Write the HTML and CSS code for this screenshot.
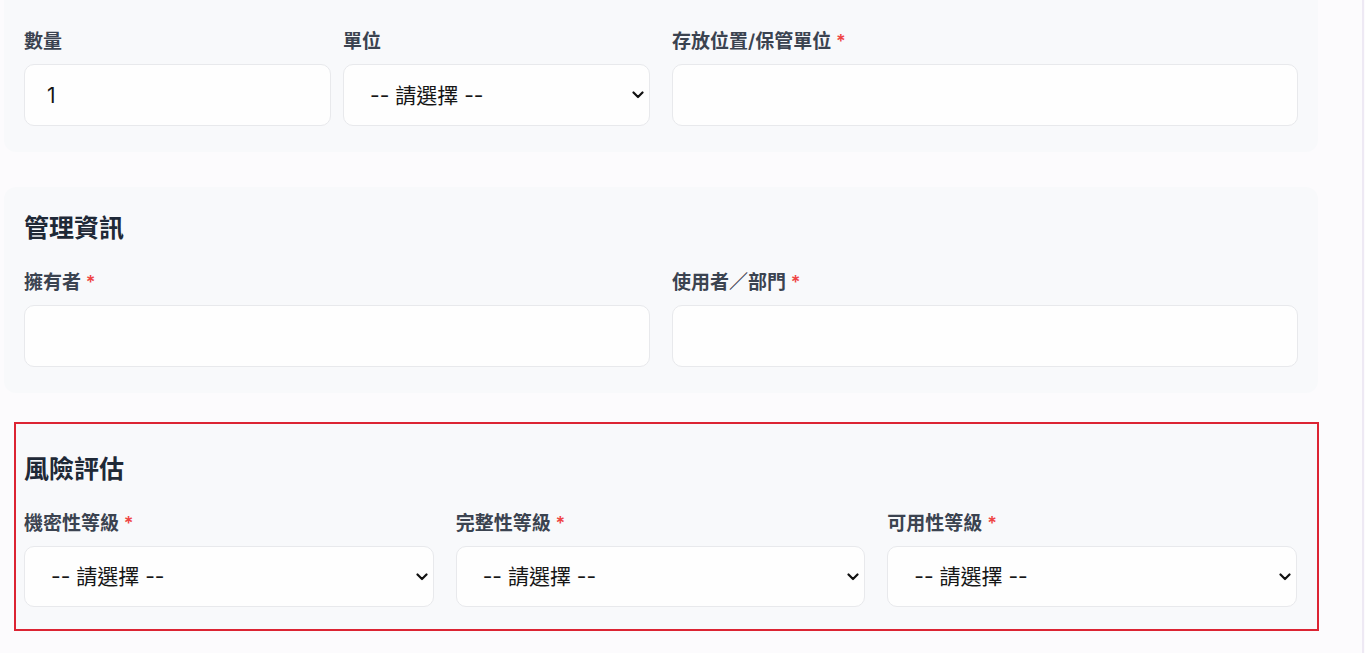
FILE: index.html
```html
<!DOCTYPE html>
<html lang="zh-Hant">
<head>
<meta charset="utf-8">
<title>資產表單</title>
<link rel="stylesheet" href="styles.css">
</head>
<body>
<div class="page">
  <div class="main">
    <section class="card card--clipped">
      <div class="grid-2">
        <div class="grid-2 grid-2--tight">
          <div class="field-group">
            <label class="label">數量</label>
            <input class="control" type="text" value="1">
          </div>
          <div class="field-group">
            <label class="label">單位</label>
            <div class="select-wrap">
              <select class="control control--select"><option>-- 請選擇 --</option></select>
              <svg class="chevron" viewBox="0 0 12 8" width="12" height="8"><path d="M1.5 1.5 L6 6 L10.5 1.5" fill="none" stroke="#111" stroke-width="2.2" stroke-linecap="round" stroke-linejoin="round"/></svg>
            </div>
          </div>
        </div>
        <div class="field-group">
          <label class="label">存放位置/保管單位 <span class="req">*</span></label>
          <input class="control" type="text">
        </div>
      </div>
    </section>

    <section class="card">
      <h2 class="card-title">管理資訊</h2>
      <div class="grid-2">
        <div class="field-group">
          <label class="label">擁有者 <span class="req">*</span></label>
          <input class="control" type="text">
        </div>
        <div class="field-group">
          <label class="label">使用者／部門 <span class="req">*</span></label>
          <input class="control" type="text">
        </div>
      </div>
    </section>

    <section class="card card--flagged">
      <h2 class="card-title">風險評估</h2>
      <div class="grid-3">
        <div class="field-group">
          <label class="label">機密性等級 <span class="req">*</span></label>
          <div class="select-wrap">
            <select class="control control--select"><option>-- 請選擇 --</option></select>
            <svg class="chevron" viewBox="0 0 12 8" width="12" height="8"><path d="M1.5 1.5 L6 6 L10.5 1.5" fill="none" stroke="#111" stroke-width="2.2" stroke-linecap="round" stroke-linejoin="round"/></svg>
          </div>
        </div>
        <div class="field-group">
          <label class="label">完整性等級 <span class="req">*</span></label>
          <div class="select-wrap">
            <select class="control control--select"><option>-- 請選擇 --</option></select>
            <svg class="chevron" viewBox="0 0 12 8" width="12" height="8"><path d="M1.5 1.5 L6 6 L10.5 1.5" fill="none" stroke="#111" stroke-width="2.2" stroke-linecap="round" stroke-linejoin="round"/></svg>
          </div>
        </div>
        <div class="field-group">
          <label class="label">可用性等級 <span class="req">*</span></label>
          <div class="select-wrap">
            <select class="control control--select"><option>-- 請選擇 --</option></select>
            <svg class="chevron" viewBox="0 0 12 8" width="12" height="8"><path d="M1.5 1.5 L6 6 L10.5 1.5" fill="none" stroke="#111" stroke-width="2.2" stroke-linecap="round" stroke-linejoin="round"/></svg>
          </div>
        </div>
      </div>
    </section>
  </div>
</div>
</body>
</html>
```

FILE: styles.css
```css
* { box-sizing: border-box; }

html, body {
  margin: 0;
  padding: 0;
  background: #fcfbfd;
  font-family: "Inter", "Noto Sans CJK TC", sans-serif;
  color: #1f2937;
}

.page {
  width: 1364px;
  min-height: 100vh;
  border-right: 2px solid #eee9f4;
  overflow: hidden;
}

.main {
  margin-left: 4px;
  width: 1314px;
  display: flex;
  flex-direction: column;
}

.card {
  background: #f8f9fb;
  border-radius: 12px;
  padding: 25px 20px 26px 20px;
}

.card--clipped {
  border-radius: 0 0 12px 12px;
  padding-top: 29px;
}

.card + .card {
  margin-top: 35px;
}

.card--flagged {
  margin-top: 29px !important;
  margin-left: 10px;
  width: 1305px;
  border: 2px solid #dc2433;
  border-radius: 0;
  padding: 29px 20px 22px 8px;
}

.card-title {
  margin: 0 0 26px 0;
  font-size: 25px;
  line-height: 32px;
  font-weight: 700;
  color: #1f2937;
}

.card--flagged .card-title {
  margin-bottom: 26px;
}

.grid-2 {
  display: grid;
  grid-template-columns: 1fr 1fr;
  column-gap: 22px;
}

.grid-2--tight {
  column-gap: 12px;
}

.grid-3 {
  display: grid;
  grid-template-columns: 1fr 1fr 1fr;
  column-gap: 22px;
}

.field-group {
  display: flex;
  flex-direction: column;
  min-width: 0;
}

.label {
  font-size: 19px;
  line-height: 26px;
  font-weight: 600;
  color: #3b4350;
  margin-bottom: 9px;
}

.req {
  color: #ef4444;
  font-size: 18px;
}

.control {
  width: 100%;
  height: 62px;
  border: 1px solid #e8e9ec;
  border-radius: 10px;
  background: #fefefe;
  font-family: "Inter", "Noto Sans CJK TC", sans-serif;
  font-size: 21px;
  color: #161616;
  padding: 0 22px;
  outline: none;
}

.card--flagged .control {
  height: 61px;
}

.select-wrap {
  position: relative;
}

.control--select {
  appearance: none;
  -webkit-appearance: none;
  padding-left: 26px;
  padding-right: 30px;
}

.chevron {
  position: absolute;
  right: 6px;
  top: 50%;
  margin-top: -4px;
  pointer-events: none;
}
```
